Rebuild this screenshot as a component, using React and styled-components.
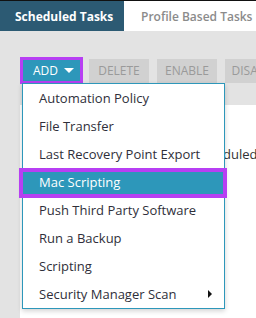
import React from 'react'
import styled, { createGlobalStyle } from 'styled-components'

const GlobalStyle = createGlobalStyle`
  html, body {
    margin: 0;
    padding: 0;
    overflow: hidden;
  }
  body {
    font-family: "Open Sans", "Liberation Sans", sans-serif;
  }
`;

const items = [
  { label: 'Automation Policy' },
  { label: 'File Transfer' },
  { label: 'Last Recovery Point Export' },
  { label: 'Mac Scripting', active: true },
  { label: 'Push Third Party Software' },
  { label: 'Run a Backup' },
  { label: 'Scripting' },
  { label: 'Security Manager Scan', submenu: true },
];

function App() {
  return (
    <>
      <GlobalStyle />
      <Page>
        <TabBar>
          <Tab active>Scheduled Tasks</Tab>
          <Tab>Profile Based Tasks</Tab>
        </TabBar>

        <Toolbar>
          <AddOutline>
            <AddButton>
              ADD <Caret />
            </AddButton>
          </AddOutline>
          <GreyButton>DELETE</GreyButton>
          <GreyButton>ENABLE</GreyButton>
          <GreyButton>DISABLE</GreyButton>

          <Menu>
            {items.map(item => (
              <MenuItem key={item.label} active={item.active}>
                {item.label}
                {item.submenu && <SubArrow />}
              </MenuItem>
            ))}
          </Menu>
        </Toolbar>

        <Content>
          <EmptyText>There are no tasks scheduled</EmptyText>
        </Content>
      </Page>
    </>
  )
}

const Page = styled.div`
  width: 256px;
  height: 318px;
  border-top: 1px solid #111;
  box-sizing: border-box;
  background: #e3e3e3;
  display: flex;
  flex-direction: column;
  overflow: hidden;
`;

const TabBar = styled.div`
  display: flex;
  height: 30px;
  background: #fff;
  flex-shrink: 0;
`;

const Tab = styled.div`
  display: flex;
  align-items: center;
  padding: 0 ${props => props.active ? '15px' : '17px'};
  width: ${props => props.active ? '124px' : 'auto'};
  box-sizing: border-box;
  flex-shrink: 0;
  white-space: nowrap;
  font-size: 12px;
  font-weight: ${props => props.active ? 700 : 600};
  color: ${props => props.active ? '#fff' : '#8b8b8b'};
  background: ${props => props.active ? '#2c5a73' : '#fff'};
`;

const Toolbar = styled.div`
  position: relative;
  display: flex;
  align-items: center;
  padding: 26px 0 21px 20px;
  flex-shrink: 0;
  z-index: 2;
`;

const AddOutline = styled.div`
  border: 3px solid #b73ff3;
  margin-right: 6px;
`;

const AddButton = styled.div`
  display: flex;
  align-items: center;
  gap: 6px;
  width: 57px;
  height: 21px;
  box-sizing: border-box;
  padding-left: 10px;
  background: #2d97ba;
  color: #fff;
  font-size: 12px;
`;

const Caret = styled.span`
  width: 0;
  height: 0;
  border-left: 5px solid transparent;
  border-right: 5px solid transparent;
  border-top: 5px solid #fff;
`;

const GreyButton = styled.div`
  display: flex;
  align-items: center;
  justify-content: center;
  flex-shrink: 0;
  width: 60px;
  height: 24px;
  margin-right: 8px;
  background: #d1d1d1;
  color: #9a9a9a;
  font-size: 12px;
`;

const Menu = styled.div`
  position: absolute;
  left: 22px;
  top: 52px;
  width: 203px;
  box-sizing: border-box;
  background: #fff;
  border: 1px solid #2d97ba;
  box-shadow: 0 2px 5px rgba(0, 0, 0, 0.18);
`;

const MenuItem = styled.div`
  position: relative;
  display: flex;
  align-items: center;
  height: 28px;
  padding-left: 16px;
  font-size: 13px;
  white-space: nowrap;
  color: ${props => props.active ? '#fff' : '#2f2f3a'};
  background: ${props => props.active ? '#2d97ba' : 'transparent'};

  &::after {
    content: ${props => props.active ? '""' : 'none'};
    position: absolute;
    left: -4px;
    right: -3px;
    top: 0;
    bottom: -2px;
    border: 4px solid #b73ff3;
  }
`;

const SubArrow = styled.span`
  position: absolute;
  right: 12px;
  width: 0;
  height: 0;
  border-top: 4px solid transparent;
  border-bottom: 4px solid transparent;
  border-left: 4px solid #111;
`;

const Content = styled.div`
  flex: 1;
  margin-left: 20px;
  background: #fff;
  padding-top: 40px;
`;

const EmptyText = styled.div`
  white-space: nowrap;
  padding-left: 60px;
  font-size: 13px;
  color: #333;
`;

export default App
